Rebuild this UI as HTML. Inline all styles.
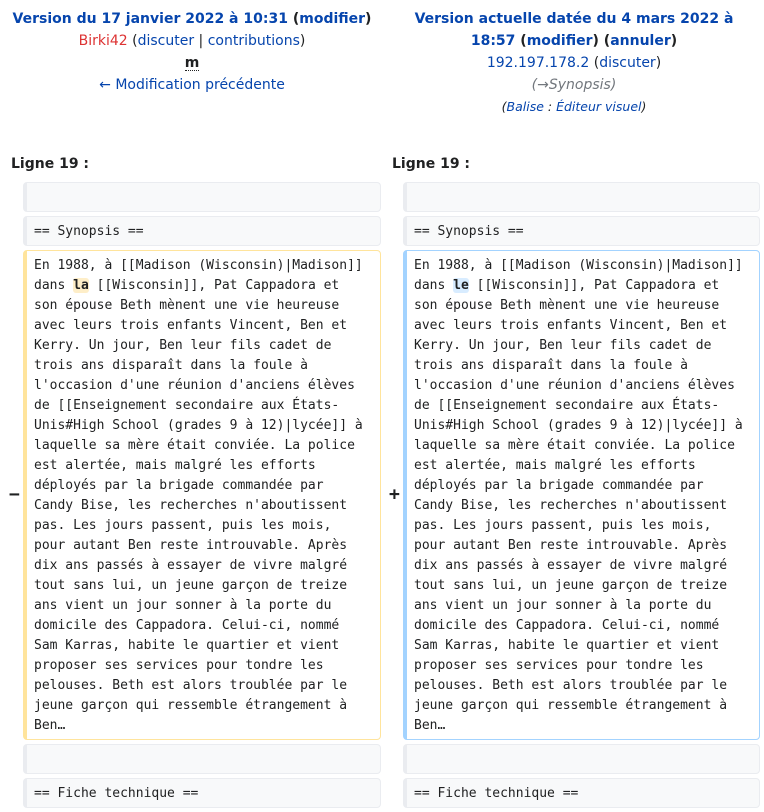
<!DOCTYPE html>
<html><head><meta charset="utf-8"><style>
*{box-sizing:border-box;margin:0;padding:0}
body{width:764px;height:812px;background:#fff;font-family:"DejaVu Sans","Liberation Sans",sans-serif;color:#202122;position:relative;overflow:hidden}
a{color:#0645ad;text-decoration:none}
.hd{position:absolute;top:8px;text-align:center;font-size:14px;line-height:22px}
.hd b{font-weight:bold}
.red{color:#d33}
.gray{color:#72777d;font-style:italic}
.sm{font-size:12.5px;font-style:italic}
.lg{position:absolute;top:153px;font-weight:bold;font-size:14px;line-height:22px}
.box{position:absolute;border:1px solid #eaecf0;border-left:4px solid #eaecf0;border-radius:4px;background:#f8f9fa;font-family:"DejaVu Sans Mono","Liberation Mono",monospace;font-size:13px;line-height:20px;padding:5px 6px 3px 7px;white-space:pre;color:#202122}
.del{background:#fff;border-color:#ffe49c}
.add{background:#fff;border-color:#a3d3ff}
.l{left:23px;width:358px}
.r{left:403px;width:357px}
.hl1{background:#feeec8;font-weight:bold;border-radius:3px}
.hl2{background:#d8ecff;font-weight:bold;border-radius:3px}
.mk{position:absolute;top:483px;font-weight:bold;font-size:18px;line-height:24px;font-family:"DejaVu Sans Mono",monospace}
</style></head><body>
<div class="hd" style="left:0;width:384px"><b><a>Version du 17 janvier 2022 à 10:31</a> (<a>modifier</a>)</b><br><a class="red">Birki42</a> (<a>discuter</a> | <a>contributions</a>)<br><b style="border-bottom:1px dotted #202122;line-height:14px;display:inline-block">m</b><br><a>← Modification précédente</a></div>
<div class="hd" style="left:384px;width:380px;padding:0 18px"><b><a>Version actuelle datée du 4 mars 2022 à 18:57</a> (<a>modifier</a>) (<a>annuler</a>)</b><br><a>192.197.178.2</a> (<a>discuter</a>)<br><span class="gray">(→Synopsis)</span><br><span class="sm">(<a>Balise</a> : <a>Éditeur visuel</a>)</span></div>
<div class="lg" style="left:11px">Ligne 19 :</div>
<div class="lg" style="left:392px">Ligne 19 :</div>
<div class="box l" style="top:182px;height:30px"></div>
<div class="box r" style="top:182px;height:30px"></div>
<div class="box l" style="top:216px;height:30px">== Synopsis ==</div>
<div class="box r" style="top:216px;height:30px">== Synopsis ==</div>
<div class="mk" style="left:9px">−</div>
<div class="mk" style="left:389px">+</div>
<div class="box l del" style="top:250px;height:490px">En 1988, à [[Madison (Wisconsin)|Madison]]
dans <span class="hl1">la</span> [[Wisconsin]], Pat Cappadora et
son épouse Beth mènent une vie heureuse
avec leurs trois enfants Vincent, Ben et
Kerry. Un jour, Ben leur fils cadet de
trois ans disparaît dans la foule à
l'occasion d'une réunion d'anciens élèves
de [[Enseignement secondaire aux États-
Unis#High School (grades 9 à 12)|lycée]] à
laquelle sa mère était conviée. La police
est alertée, mais malgré les efforts
déployés par la brigade commandée par
Candy Bise, les recherches n'aboutissent
pas. Les jours passent, puis les mois,
pour autant Ben reste introuvable. Après
dix ans passés à essayer de vivre malgré
tout sans lui, un jeune garçon de treize
ans vient un jour sonner à la porte du
domicile des Cappadora. Celui-ci, nommé
Sam Karras, habite le quartier et vient
proposer ses services pour tondre les
pelouses. Beth est alors troublée par le
jeune garçon qui ressemble étrangement à
Ben…</div>
<div class="box r add" style="top:250px;height:490px">En 1988, à [[Madison (Wisconsin)|Madison]]
dans <span class="hl2">le</span> [[Wisconsin]], Pat Cappadora et
son épouse Beth mènent une vie heureuse
avec leurs trois enfants Vincent, Ben et
Kerry. Un jour, Ben leur fils cadet de
trois ans disparaît dans la foule à
l'occasion d'une réunion d'anciens élèves
de [[Enseignement secondaire aux États-
Unis#High School (grades 9 à 12)|lycée]] à
laquelle sa mère était conviée. La police
est alertée, mais malgré les efforts
déployés par la brigade commandée par
Candy Bise, les recherches n'aboutissent
pas. Les jours passent, puis les mois,
pour autant Ben reste introuvable. Après
dix ans passés à essayer de vivre malgré
tout sans lui, un jeune garçon de treize
ans vient un jour sonner à la porte du
domicile des Cappadora. Celui-ci, nommé
Sam Karras, habite le quartier et vient
proposer ses services pour tondre les
pelouses. Beth est alors troublée par le
jeune garçon qui ressemble étrangement à
Ben…</div>
<div class="box l" style="top:744px;height:30px"></div>
<div class="box r" style="top:744px;height:30px"></div>
<div class="box l" style="top:778px;height:30px">== Fiche technique ==</div>
<div class="box r" style="top:778px;height:30px">== Fiche technique ==</div>
</body></html>
